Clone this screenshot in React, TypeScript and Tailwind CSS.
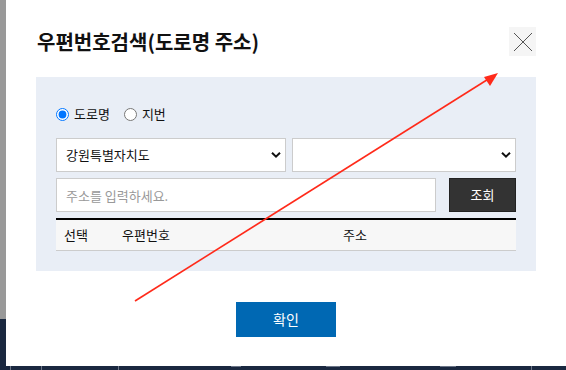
import { useState } from "react";

const font = { fontFamily: '"Noto Sans CJK KR", "Noto Sans", sans-serif' };

function Chevron() {
  return (
    <svg
      width="10"
      height="7"
      viewBox="0 0 10 7"
      className="pointer-events-none absolute right-[5px] top-1/2 -translate-y-1/2"
    >
      <path d="M1 1.2 L5 5.2 L9 1.2" fill="none" stroke="#111" strokeWidth="2" />
    </svg>
  );
}

export default function App() {
  const [mode, setMode] = useState("road");
  const [sido, setSido] = useState("강원특별자치도");

  return (
    <div
      className="relative flex h-[370px] w-[566px] flex-col overflow-hidden bg-[#1a2840]"
      style={font}
    >
      <div className="flex h-[366px]">
        {/* page behind the dialog */}
        <div className="flex w-[6px] flex-col">
          <div className="h-[319px] bg-[#999999]" />
          <div className="flex-1 bg-[#1a2840]" />
        </div>

        {/* dialog */}
        <div className="flex flex-1 flex-col bg-white px-[30px] pt-[27px]">
          <div className="flex items-center justify-between">
            <h1 className="pl-[1px] text-[20px] font-bold leading-[29px] text-[#111]">
              우편번호검색(도로명 주소)
            </h1>
            <button
              type="button"
              className="flex h-[29px] w-[27px] items-center justify-center bg-[#f5f5f5]"
            >
              <svg width="20" height="20" viewBox="0 0 20 20">
                <path d="M1 1 L19 19 M19 1 L1 19" stroke="#555" strokeWidth="1" fill="none" />
              </svg>
            </button>
          </div>

          <div className="mt-[21px] bg-[#e9eef6] px-[20px] pb-[20px] pt-[27px]">
            <div className="flex h-[20px] items-center text-[13px] text-[#111]">
              <label className="flex items-center gap-[5px]">
                <input
                  type="radio"
                  name="mode"
                  className="m-0 h-[13px] w-[13px]"
                  checked={mode === "road"}
                  onChange={() => setMode("road")}
                />
                도로명
              </label>
              <label className="ml-[14px] flex items-center gap-[5px]">
                <input
                  type="radio"
                  name="mode"
                  className="m-0 h-[13px] w-[13px]"
                  checked={mode === "jibun"}
                  onChange={() => setMode("jibun")}
                />
                지번
              </label>
            </div>

            <div className="mt-[14px] flex gap-[6px]">
              <div className="relative w-[230px]">
                <select
                  value={sido}
                  onChange={(e) => setSido(e.target.value)}
                  className="h-[34px] w-full appearance-none border border-[#cccccc] bg-white pl-[9px] text-[13px] text-[#111] outline-none"
                >
                  <option>강원특별자치도</option>
                  <option>서울특별시</option>
                  <option>경기도</option>
                </select>
                <Chevron />
              </div>
              <div className="relative flex-1">
                <select className="h-[34px] w-full appearance-none border border-[#cccccc] bg-white pl-[9px] text-[13px] outline-none">
                  <option></option>
                </select>
                <Chevron />
              </div>
            </div>

            <div className="mt-[6px] flex justify-between">
              <input
                type="text"
                placeholder="주소를 입력하세요."
                className="h-[34px] w-[380px] border border-[#cccccc] bg-white px-[9px] text-[13px] outline-none placeholder:text-[#999]"
              />
              <button
                type="button"
                className="h-[34px] w-[67px] border border-[#222] bg-[#333333] text-[13px] text-white"
              >
                조회
              </button>
            </div>

            <div className="mt-[6px] flex h-[33px] items-center border-b border-t-2 border-b-[#cccccc] border-t-black bg-[#f7f7f7] text-[13px] text-[#111]">
              <div className="w-[66px] pl-[8px]">선택</div>
              <div className="w-[221px]">우편번호</div>
              <div className="flex-1">주소</div>
            </div>
          </div>

          <div className="mt-[31px] flex justify-center">
            <button
              type="button"
              className="h-[35px] w-[100px] bg-[#0068b3] text-[14px] text-white"
            >
              확인
            </button>
          </div>
        </div>
      </div>

      {/* tops of icons on the page behind */}
      <div className="flex h-[4px] items-start">
        <div className="ml-[10px] h-[4px] w-[1px] bg-[#6b7587]" />
        <div className="ml-[30px] h-[4px] w-[1px] bg-[#6b7587]" />
        <div className="ml-[76px] h-[4px] w-[1px] bg-[#6b7587]" />
        <div className="ml-[112px] h-[4px] w-[10px] border-t border-[#6b7587]" />
        <div className="ml-[85px] h-[4px] w-[14px] border-t border-[#6b7587]" />
        <div className="ml-[100px] h-[4px] w-[16px] border-t border-[#6b7587]" />
        <div className="ml-[75px] h-[4px] w-[1px] bg-[#6b7587]" />
      </div>

      {/* red annotation arrow over the screenshot */}
      <svg
        className="pointer-events-none absolute left-0 top-0"
        width="566"
        height="370"
        viewBox="0 0 566 370"
      >
        <line x1="135" y1="301" x2="490" y2="78" stroke="#ff2a1a" strokeWidth="1.6" />
        <path d="M498 73 L484 77 L490 86 Z" fill="#ff2a1a" />
      </svg>
    </div>
  );
}
